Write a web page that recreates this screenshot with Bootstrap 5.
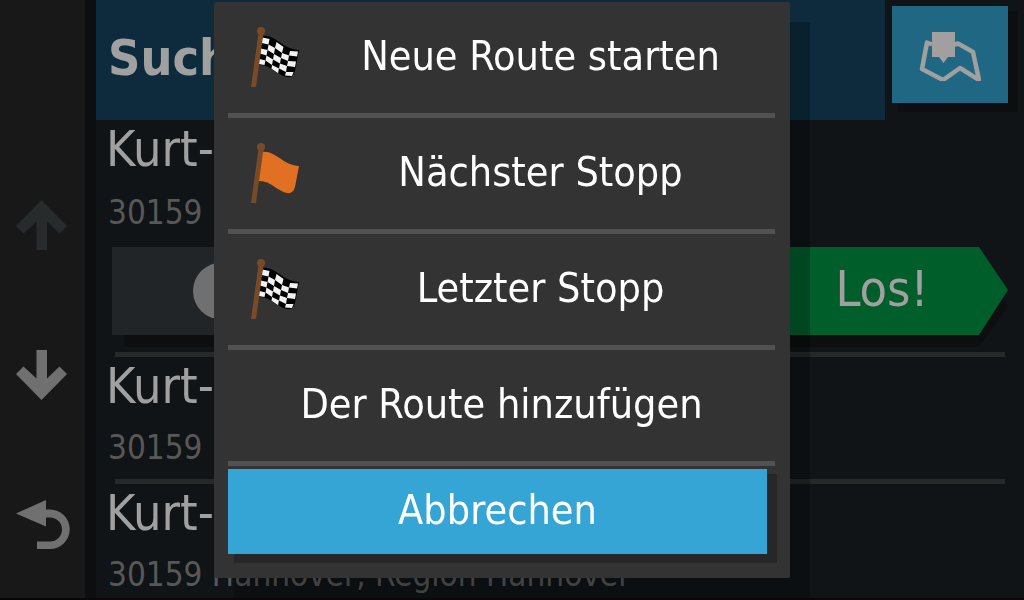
<!DOCTYPE html>
<html lang="de">
<head>
<meta charset="utf-8">
<meta name="viewport" content="width=device-width, initial-scale=1">
<title>Navigation</title>
<link href="https://cdn.jsdelivr.net/npm/bootstrap@5.3.0/dist/css/bootstrap.min.css" rel="stylesheet">
<style>
body { background: #101417; color: #a0a0a0; font-family: "DejaVu Sans Condensed", "DejaVu Sans", sans-serif; }
button { font-family: inherit; }
.app-shell { border-bottom: 2px solid #090709; }
.side-bar { width: 96px; background: #181818; border-right: 11px solid #0d0e0f; padding-top: 25vh; }
.side-btn { height: 25vh; color: #707070; }
.side-btn:disabled { color: #272b2c; opacity: 1; }
.title-bar { height: 120px; background: #0d2b3c; padding-bottom: 4px; }
.page-title { font-size: 50px; line-height: 58px; }
.head-gap { width: 139px; padding: 6px 16px 0 7px; }
.map-btn { height: 97px; background: #206783; box-shadow: 8px 7px 0 2px #0d0e0f; }
.result-row { border-bottom: 5px solid #25292a; margin: 0 19px; padding-bottom: 12px; }
.result-row.is-open { padding-bottom: 17px; }
.result-text { margin-left: -9px; }
.result-name { font-size: 50px; line-height: 58px; }
.result-place { font-size: 33px; line-height: 38px; margin: 14px 0 0 2px; color: #585858; white-space: nowrap; }
.is-open .result-place { margin-top: 16px; }
.action-row { margin: 15px -3px 0; height: 88px; }
.info-btn { width: 218px; background: #212528; box-shadow: 12px 12px 0 #0d0e0f; }
.go-btn { width: 256px; color: #a0a0a0; font-size: 50px; line-height: 58px; padding: 0 0 4px 4px; }
.go-shape { position: absolute; left: 0; top: 0; width: 100%; height: 100px; }
.menu-layer { padding: 2px 20px 22px 0; }
.menu-box { width: 576px; max-width: 100%; background: #333; border-radius: 2px; padding: 0 15px 24px 14px; box-shadow: 20px 20px 0 rgba(0, 0, 0, .25); }
.menu-item { height: 116px; border-bottom: 5px solid #525252; color: #fff; font-size: 41px; line-height: 48px; padding: 0 0 4px; }
.menu-icon { width: 78px; padding: 2px 0 0 20px; }
.cancel-btn { height: 85px; margin: 3px 8px 0 0; padding: 0 0 4px; background: #34a5d4; color: #fff; font-size: 41px; line-height: 48px; box-shadow: 8px 7px 0 2px #272727; }
</style>
</head>
<body>
<svg width="0" height="0" class="position-absolute" aria-hidden="true">
  <defs>
    <g id="pole" fill="#784b28">
      <circle cx="11" cy="5" r="4"/>
      <path d="M8.500 7h5L6 61H1Z"/>
    </g>
    <path id="cloth" d="M12 10C25 8 34 24 49 24L45 45Q43 52 37 51C27 49 20 38 8 39Z"/>
    <clipPath id="clothClip"><use href="#cloth"/></clipPath>
    <g id="race">
      <use href="#cloth" fill="#000"/>
      <g clip-path="url(#clothClip)" fill="#f2f2f2">
        <path d="M12.500 11.500 19.500 13 18.500 18.500 11.500 17Z"/>
        <path d="M26.500 16 33.500 21 32 27 25 22Z"/>
        <path d="M40 25 48 25.500 47 30.500 39 29.500Z"/>
        <path d="M18.500 18.500 25 22 24 28 17.500 24Z"/>
        <path d="M32 27 39 29.500 38 35 31 32Z"/>
        <path d="M11 22.500 17.500 24 16.500 29.500 10 27.500Z"/>
        <path d="M24 28 31 32 30 37.500 23 33.500Z"/>
        <path d="M38 35 46 35.500 45 41 37 40Z"/>
        <path d="M16.500 29.500 23 33.500 22 39 15.500 34.500Z"/>
        <path d="M30 37.500 37 40 36 46 29 42.500Z"/>
        <path d="M9.500 33 15.500 34.500 14.500 39 8.500 38Z"/>
        <path d="M22 39 29 42.500 28 47.500 21.500 43Z"/>
        <path d="M36 46 43.500 46 42 50 35 49.500Z"/>
      </g>
    </g>
  </defs>
</svg>

<div class="app-shell d-flex vh-100 overflow-hidden">
  <nav class="side-bar d-flex flex-column flex-shrink-0" aria-label="Liste">
    <button class="side-btn btn border-0 rounded-0 p-0 ps-3 text-start flex-shrink-0" disabled aria-label="Nach oben">
      <svg width="52" height="50" fill="currentColor"><path d="M25.500 0 51 26 43.500 33.500 31 21.500V50H20.500V21.500L7.500 33.500 0 26Z"/></svg>
    </button>
    <button class="side-btn btn border-0 rounded-0 p-0 ps-3 text-start flex-shrink-0" aria-label="Nach unten">
      <svg width="52" height="50" fill="currentColor"><path d="M25.500 50 51 24 43.500 16.500 31 28.500V0H20.500V28.500L7.500 16.500 0 24Z"/></svg>
    </button>
    <button class="side-btn btn border-0 rounded-0 p-0 ps-3 text-start flex-shrink-0" aria-label="Zurück">
      <svg width="54" height="50" fill="currentColor"><path d="M0 13.500 30 0V9.500H34A19.500 19.500 0 0 1 34 49H21V41.500H34A12 12 0 0 0 34 17.500H30V26.500Z"/></svg>
    </button>
  </nav>

  <main class="flex-grow-1">
    <header class="d-flex">
      <div class="title-bar flex-grow-1 d-flex align-items-center ps-2">
        <h1 class="page-title fw-bold m-0 ms-1">Such</h1>
      </div>
      <div class="head-gap">
        <button class="map-btn btn border-0 rounded-0 p-0 w-100 d-flex align-items-center justify-content-center" aria-label="Karte">
          <svg width="62" height="52" viewBox="-1 -2 62 52">
            <path d="M12 13.500 7 11.500 2 38 23 49 40 37 59 49 53 21 38 12.500 33 14" fill="none" stroke="#a0a0a0" stroke-width="4.500" stroke-linejoin="round" class="map-line"/>
            <path d="M12 1H35V26H28L23.500 32 19 26H12Z" fill="#a0a0a0"/>
          </svg>
        </button>
      </div>
    </header>

    <section>
      <article class="result-row is-open">
        <div class="result-text">
          <div class="result-name">Kurt-</div>
          <div class="result-place">30159</div>
        </div>
        <div class="action-row d-flex justify-content-between">
          <button class="info-btn btn border-0 rounded-0 p-0" aria-label="Info">
            <svg width="58" height="58"><circle cx="29.500" cy="29" r="28.500" fill="#707070"/></svg>
          </button>
          <button class="go-btn btn border-0 rounded-0 position-relative">
            <svg class="go-shape" viewBox="0 0 256 100" preserveAspectRatio="none" aria-hidden="true">
              <path d="M0 12H227L256 59 227 100H0Z" fill="#0d0e0f"/>
              <path d="M0 0H227L256 43 227 88H0Z" fill="#005e2b"/>
            </svg>
            <span class="position-relative">Los!</span>
          </button>
        </div>
      </article>
      <article class="result-row">
        <div class="result-text">
          <div class="result-name">Kurt-</div>
          <div class="result-place">30159</div>
        </div>
      </article>
      <article class="result-row">
        <div class="result-text">
          <div class="result-name">Kurt-</div>
          <div class="result-place">30159 Hannover, Region Hannover</div>
        </div>
      </article>
    </section>
  </main>
</div>

<div class="menu-layer position-fixed top-0 start-0 w-100 h-100 d-flex justify-content-center align-items-start overflow-hidden" role="dialog" aria-modal="true" aria-label="Route">
  <div class="menu-box d-flex flex-column">
    <button class="menu-item btn border-top-0 border-start-0 border-end-0 rounded-0 d-flex align-items-center">
      <span class="menu-icon d-flex"><svg width="54" height="62"><use href="#race" x="2"/><use href="#pole" x="2"/></svg></span>
      <span class="flex-grow-1">Neue Route starten</span>
    </button>
    <button class="menu-item btn border-top-0 border-start-0 border-end-0 rounded-0 d-flex align-items-center">
      <span class="menu-icon d-flex"><svg width="54" height="62"><use href="#cloth" x="2" fill="#e27022"/><use href="#pole" x="2"/></svg></span>
      <span class="flex-grow-1">Nächster Stopp</span>
    </button>
    <button class="menu-item btn border-top-0 border-start-0 border-end-0 rounded-0 d-flex align-items-center">
      <span class="menu-icon d-flex"><svg width="54" height="62"><use href="#race" x="2"/><use href="#pole" x="2"/></svg></span>
      <span class="flex-grow-1">Letzter Stopp</span>
    </button>
    <button class="menu-item btn border-top-0 border-start-0 border-end-0 rounded-0">Der Route hinzufügen</button>
    <button class="cancel-btn btn border-0 rounded-0">Abbrechen</button>
  </div>
</div>
<script src="https://cdn.jsdelivr.net/npm/bootstrap@5.3.0/dist/js/bootstrap.bundle.min.js"></script>
</body>
</html>
